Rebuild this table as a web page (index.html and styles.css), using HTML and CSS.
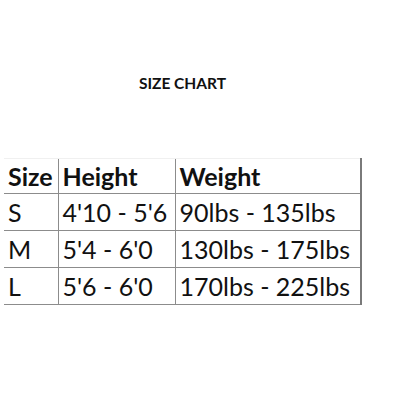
FILE: index.html
```html
<!DOCTYPE html>
<html>
<head>
<meta charset="utf-8">
<link rel="stylesheet" href="styles.css">
</head>
<body>
<div class="page">
  <h1 class="title">SIZE CHART</h1>
  <table class="chart">
    <colgroup>
      <col class="c1"><col class="c2"><col class="c3">
    </colgroup>
    <thead>
      <tr><th>Size</th><th>Height</th><th>Weight</th></tr>
    </thead>
    <tbody>
      <tr><td>S</td><td>4'10 - 5'6</td><td>90lbs - 135lbs</td></tr>
      <tr><td>M</td><td>5'4 - 6'0</td><td>130lbs - 175lbs</td></tr>
      <tr><td>L</td><td>5'6 - 6'0</td><td>170lbs - 225lbs</td></tr>
    </tbody>
  </table>
</div>
</body>
</html>
```

FILE: styles.css
```css
html, body {
  margin: 0;
  padding: 0;
  background: #ffffff;
}
.page {
  width: 400px;
  height: 400px;
  padding: 0 0 0 4px;
  box-sizing: border-box;
  font-family: Lato, "Open Sans", sans-serif;
  color: #111;
}
.title {
  width: 357px;
  margin: 0;
  padding-top: 74px;
  height: 84px;
  text-align: center;
  font-size: 15.5px;
  font-weight: 700;
  line-height: 18px;
}
.chart {
  border-collapse: collapse;
  table-layout: fixed;
  width: 357px;
  font-size: 25px;
}
.c1 { width: 54px; }
.c2 { width: 117px; }
.c3 { width: 186px; }
.chart th, .chart td {
  text-align: left;
  padding: 0 0 0 4px;
  white-space: nowrap;
  border-left: 1px solid #8c8c8c;
  border-bottom: 1px solid #8c8c8c;
  line-height: 1;
}
.chart th {
  height: 34px;
  font-weight: 700;
  border-top: 1px solid #f0f0f0;
}
.chart td { height: 36px; }
.chart th:first-child, .chart td:first-child { border-left: none; }
.chart th:last-child, .chart td:last-child { border-right: 2px solid #7a7a7a; }
```
